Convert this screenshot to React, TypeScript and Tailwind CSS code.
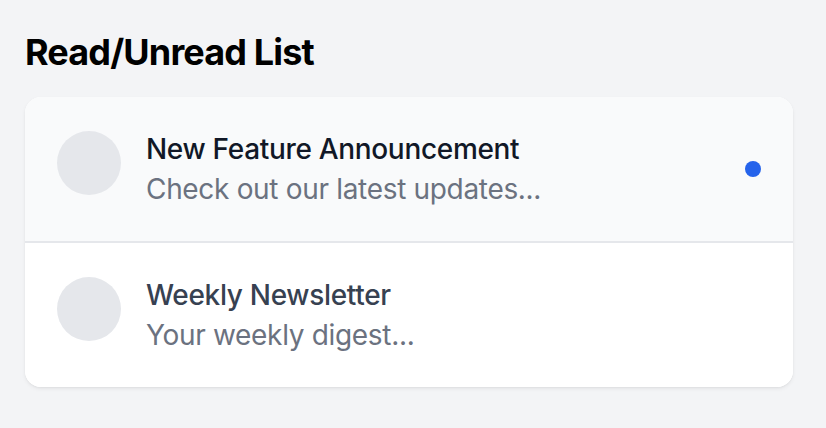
const ITEMS = [
  {
    title: "New Feature Announcement",
    preview: "Check out our latest updates...",
    unread: true,
  },
  {
    title: "Weekly Newsletter",
    preview: "Your weekly digest...",
    unread: false,
  },
];

export default function App() {
  return (
    <div
      className="min-h-screen w-full bg-[#f3f4f6] px-[25px] py-[24px]"
      style={{ fontFamily: "Inter, 'Noto Sans', sans-serif" }}
    >
      <h1 className="text-[36px] leading-[56px] font-bold tracking-[-0.85px] text-black mb-[17px]">
        Read/Unread List
      </h1>

      {/* List card */}
      <div className="w-[768px] bg-white rounded-[16px] shadow-[0_2px_4px_rgba(0,0,0,0.06),0_1px_2px_rgba(0,0,0,0.04)] overflow-hidden">
        {ITEMS.map((item, i) => (
          <div
            key={item.title}
            className={`flex items-center justify-between p-[32px] ${
              item.unread ? "bg-[#f9fafb]" : "bg-white"
            } ${i < ITEMS.length - 1 ? "border-b-2 border-[#e5e7eb]" : ""}`}
          >
            <div className="flex items-start gap-[25px]">
              <div className="w-[64px] h-[64px] mt-[2px] rounded-full bg-[#e5e7eb] shrink-0" />
              <div className="tracking-[-0.32px]">
                <p
                  className={`text-[28px] leading-[40px] font-medium ${
                    item.unread ? "text-[#111827]" : "text-[#374151]"
                  }`}
                >
                  {item.title}
                </p>
                <p className="text-[28px] leading-[40px] text-[#6b7280]">
                  {item.preview}
                </p>
              </div>
            </div>
            {item.unread && (
              <span className="w-[16px] h-[16px] rounded-full bg-[#2563eb] shrink-0" />
            )}
          </div>
        ))}
      </div>
    </div>
  );
}
